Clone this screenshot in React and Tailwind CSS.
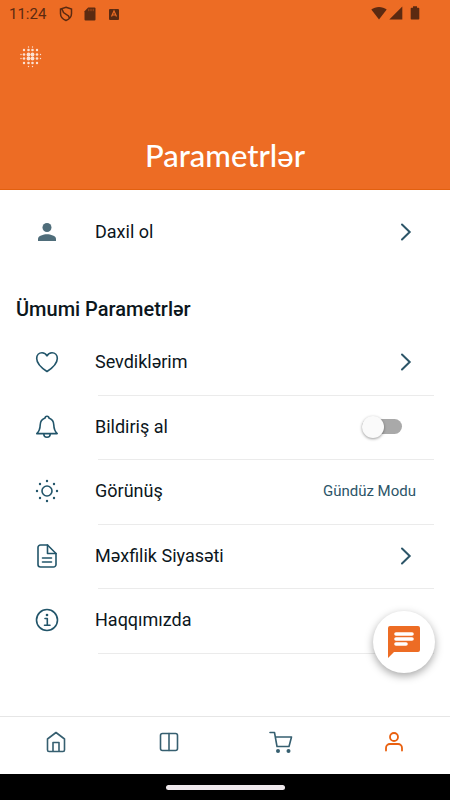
const HALFTONE = [
  [8.5, 1, 0.7], [12.5, 1, 0.7],
  [4, 4, 1.2], [8.5, 4, 1.3], [12.5, 4, 1.3], [17, 4, 1.2],
  [1, 8.5, 0.7], [4, 8.5, 1.3], [8.5, 8.5, 1.9], [12.5, 8.5, 1.9], [17, 8.5, 1.3], [20.5, 8.5, 0.7],
  [1, 12.5, 0.7], [4, 12.5, 1.3], [8.5, 12.5, 1.9], [12.5, 12.5, 1.9], [17, 12.5, 1.3], [20.5, 12.5, 0.7],
  [4, 17, 1.2], [8.5, 17, 1.3], [12.5, 17, 1.3], [17, 17, 1.2],
  [8.5, 20.5, 0.7], [12.5, 20.5, 0.7],
];

const SUN_RAYS = [
  [12, 2], [12, 22], [2, 12], [22, 12], [5, 5], [19, 5], [5, 19], [19, 19],
];

function Icon({ children, className = "size-6" }) {
  return (
    <svg
      viewBox="0 0 24 24"
      className={`${className} shrink-0`}
      fill="none"
      stroke="currentColor"
      strokeWidth="1.600"
      strokeLinecap="round"
      strokeLinejoin="round"
      aria-hidden="true"
    >
      {children}
    </svg>
  );
}

function PersonIcon() {
  return (
    <Icon>
      <g fill="#4f6d7a" stroke="none">
        <circle cx="12" cy="7.5" r="4.5" />
        <path d="M3 21v-2.200C3 15.700 8.500 14.200 12 14.200s9 1.500 9 4.600V21z" />
      </g>
    </Icon>
  );
}

function HeartIcon() {
  return (
    <Icon>
      <path d="M12 21.500C10.500 20.500 1.700 14.500 1.700 8.400 1.700 5 4 2.700 7 2.700c2.200 0 4 1.200 5 3.200 1-2 2.800-3.200 5-3.200 3 0 5.300 2.300 5.300 5.700 0 6.100-8.800 12.100-10.300 13.100z" />
    </Icon>
  );
}

function BellIcon() {
  return (
    <Icon>
      <path d="M12 1.200c-1.300 0-1.900.9-1.900 1.900C7 4.200 5.300 6.800 5.200 10c-.1 4.800-1 6.200-3.400 8.600h20.400c-2.400-2.400-3.300-3.800-3.400-8.600-.1-3.200-1.800-5.800-4.900-6.900 0-1-.6-1.900-1.900-1.900z" />
      <path d="M8.800 19c0 2 1.400 3.300 3.200 3.300s3.200-1.300 3.200-3.300" />
    </Icon>
  );
}

function SunIcon() {
  return (
    <Icon>
      <circle cx="12" cy="12" r="5" />
      {SUN_RAYS.map(([x, y]) => (
        <circle key={`${x}-${y}`} cx={x} cy={y} r="1.200" fill="currentColor" stroke="none" />
      ))}
    </Icon>
  );
}

function DocumentIcon() {
  return (
    <Icon>
      <path d="M12.500 1H5.500A2.500 2.500 0 0 0 3 3.500v17A2.500 2.500 0 0 0 5.500 23h13a2.500 2.500 0 0 0 2.500-2.500V9.500z" />
      <path d="M12.500 1v8.500H21M7.500 14h9M7.500 18h9" />
    </Icon>
  );
}

function InfoIcon() {
  return (
    <Icon>
      <circle cx="12" cy="12" r="10.500" />
      <path d="M10 10.500h2.300v6.500M9.500 17.200h5.500" />
      <circle cx="12" cy="7" r="1.300" fill="currentColor" stroke="none" />
    </Icon>
  );
}

function Chevron() {
  return (
    <svg viewBox="0 0 12 18" className="mr-1 h-[18px] w-3 shrink-0 text-[#2c5568]" fill="none" stroke="currentColor" strokeWidth="2" aria-hidden="true">
      <path d="M2 1.500 9.700 9 2 16.500" strokeLinecap="round" />
    </svg>
  );
}

function StatusBar() {
  return (
    <div className="flex h-7 items-center px-2 text-[#5b2a11]">
      <span className="w-12 pl-px text-[15px] leading-5">11:24</span>
      <svg viewBox="0 0 14 16" className="ml-[3px] h-4 w-3.5" fill="none" stroke="currentColor" strokeWidth="1.500" aria-hidden="true">
        <path d="M7 1.200 12.500 3v4.500c0 3.500-2.500 5.800-5.500 7-3-1.200-5.500-3.500-5.500-7V3zM3 3l1.500 3.500 5 3.500 1 2.500" />
      </svg>
      <svg viewBox="0 0 12 14" className="ml-[11px] h-3.5 w-3" fill="currentColor" aria-hidden="true">
        <path d="M4.200.5H10.500A1 1 0 0 1 11.500 1.500v11a1 1 0 0 1-1 1h-9a1 1 0 0 1-1-1V4.200z" />
        <path d="M4.800 1.800v2.400M7 1.800v2.400M9.200 1.800v2.400" stroke="#a74a1a" strokeWidth="1" />
      </svg>
      <svg viewBox="0 0 12 12" className="ml-3 size-3" fill="currentColor" aria-hidden="true">
        <rect x="1" y="1" width="10" height="11" rx="1" />
        <path d="M3.500 8.500 6 3l2.500 5.500M4.300 7h3.400" fill="none" stroke="#ed6c24" strokeWidth="1.200" />
      </svg>
      <div className="ml-auto flex items-center pr-[22px] pb-0.5">
        <svg viewBox="0 0 16 14" className="h-3.5 w-4" fill="currentColor" aria-hidden="true">
          <path d="M8 13.500.3 3.600C4.500.1 11.500.1 15.700 3.600z" />
        </svg>
        <svg viewBox="0 0 14 14" className="ml-0.5 size-3.5" fill="currentColor" aria-hidden="true">
          <path d="M13.300.5v13H.3z" />
        </svg>
        <svg viewBox="0 0 10 14" className="ml-[7px] h-3.5 w-2.5" fill="currentColor" aria-hidden="true">
          <path d="M3 .3h4v1.400h1.500a.8.800 0 0 1 .8.800v10.200a.8.800 0 0 1-.8.800h-7a.8.800 0 0 1-.8-.8V2.500a.8.800 0 0 1 .8-.8H3z" />
        </svg>
      </div>
    </div>
  );
}

function RowBody({ icon, label, children }) {
  return (
    <>
      <span className="flex w-[60px] shrink-0 text-[#22556a]">{icon}</span>
      <span className="flex-1 text-left text-lg leading-6">{label}</span>
      {children}
    </>
  );
}

const ROW = "flex w-full flex-1 items-center pr-[34px] pl-[35px] pb-0.5";

function Divider() {
  return <div className="mr-4 ml-[98px] h-px bg-[#ebebeb]" />;
}

const ITEM = "flex flex-col odd:h-[65px] even:h-16";

export default function App() {
  return (
    <div className="flex min-h-screen flex-col bg-white font-['Roboto','Noto_Sans',sans-serif] text-[#0c161c]">
      <header className="flex h-[190px] flex-col border-b border-[#e2600f] bg-[#ed6c24]">
        <StatusBar />
        <button type="button" aria-label="Menyu" className="mt-[18px] ml-5 size-[22px] text-white">
          <svg viewBox="0 0 22 22" className="size-[22px]" fill="currentColor" fillOpacity="0.8" aria-hidden="true">
            {HALFTONE.map(([x, y, r]) => (
              <circle key={`${x}-${y}`} cx={x} cy={y} r={r} />
            ))}
          </svg>
        </button>
        <h1 className="mt-auto mb-3.5 text-center font-['Lato','Noto_Sans',sans-serif] text-[31px] leading-10 font-medium text-white">
          Parametrlər
        </h1>
      </header>

      <main className="relative flex-1 pb-[62px]">
        <button type="button" className="flex h-[84px] w-full items-center pr-[34px] pl-[35px]">
          <RowBody icon={<PersonIcon />} label="Daxil ol">
            <Chevron />
          </RowBody>
        </button>

        <h2 className="mt-[21px] mb-[7px] px-4 text-xl leading-[29px] font-medium">Ümumi Parametrlər</h2>

        <ul>
          <li className={ITEM}>
            <button type="button" className={ROW}>
              <RowBody icon={<HeartIcon />} label="Sevdiklərim">
                <Chevron />
              </RowBody>
            </button>
            <Divider />
          </li>
          <li className={ITEM}>
            <label className={ROW}>
              <RowBody icon={<BellIcon />} label="Bildiriş al">
                <input type="checkbox" role="switch" className="peer sr-only" />
                <span className="mr-3.5 flex h-[15px] w-10 items-center rounded-full bg-[#a9a9a9] peer-checked:justify-end peer-checked:bg-[#f4a679]">
                  <span className="size-[22px] shrink-0 rounded-full bg-[#fafafa] shadow-[0_1px_3px_rgba(0,0,0,0.4)]" />
                </span>
              </RowBody>
            </label>
            <Divider />
          </li>
          <li className={ITEM}>
            <button type="button" className={ROW}>
              <RowBody icon={<SunIcon />} label="Görünüş">
                <span className="text-[15px] leading-6 text-[#2c5568]">Gündüz Modu</span>
              </RowBody>
            </button>
            <Divider />
          </li>
          <li className={ITEM}>
            <button type="button" className={ROW}>
              <RowBody icon={<DocumentIcon />} label="Məxfilik Siyasəti">
                <Chevron />
              </RowBody>
            </button>
            <Divider />
          </li>
          <li className={ITEM}>
            <button type="button" className={ROW}>
              <RowBody icon={<InfoIcon />} label="Haqqımızda" />
            </button>
            <Divider />
          </li>
        </ul>

        <button
          type="button"
          aria-label="Söhbət"
          className="absolute right-[15px] bottom-[43px] flex size-[62px] items-center justify-center rounded-full bg-white shadow-[0_3px_8px_rgba(0,0,0,0.35)]"
        >
          <svg viewBox="0 0 32 32" className="size-8" aria-hidden="true">
            <path d="M2 0h28a2 2 0 0 1 2 2v22a2 2 0 0 1-2 2H6l-6 6V2a2 2 0 0 1 2-2z" fill="#ed6c24" />
            <path d="M8 8h16M8 13h16M8 18h10" stroke="#fff" strokeWidth="3.600" strokeLinecap="round" />
          </svg>
        </button>
      </main>

      <nav className="grid h-[58px] grid-cols-4 border-t border-[#e6e6e6] pb-2 text-[#365f70]">
        <a href="#home" aria-label="Əsas" className="flex items-center justify-center">
          <Icon>
            <path d="M12 2.500 3.500 9v11A1.500 1.500 0 0 0 5 21.500h14a1.500 1.500 0 0 0 1.500-1.500V9zM9 21.500v-9h6v9" />
          </Icon>
        </a>
        <a href="#catalog" aria-label="Kataloq" className="flex items-center justify-center">
          <Icon>
            <rect x="3.500" y="3.500" width="17" height="17" rx="2" />
            <path d="M12 3.500v17" />
          </Icon>
        </a>
        <a href="#cart" aria-label="Səbət" className="flex items-center justify-center">
          <Icon>
            <path d="M1 2.500h4.500L8 16.500h12l2.500-9.500H6.300" />
            <circle cx="9" cy="21" r="2" fill="currentColor" stroke="none" />
            <circle cx="19.500" cy="21" r="2" fill="currentColor" stroke="none" />
          </Icon>
        </a>
        <a href="#profile" aria-label="Profil" aria-current="page" className="flex items-center justify-center text-[#e9600f]">
          <Icon>
            <g strokeWidth="1.800">
              <circle cx="12" cy="7" r="4" />
              <path d="M4 20.500V18a4 4 0 0 1 4-4h8a4 4 0 0 1 4 4v2.500" />
            </g>
          </Icon>
        </a>
      </nav>

      <footer className="flex h-[26px] items-center justify-center bg-black">
        <div className="h-[5px] w-[119px] rounded-full bg-[#eee8ec]" />
      </footer>
    </div>
  );
}
